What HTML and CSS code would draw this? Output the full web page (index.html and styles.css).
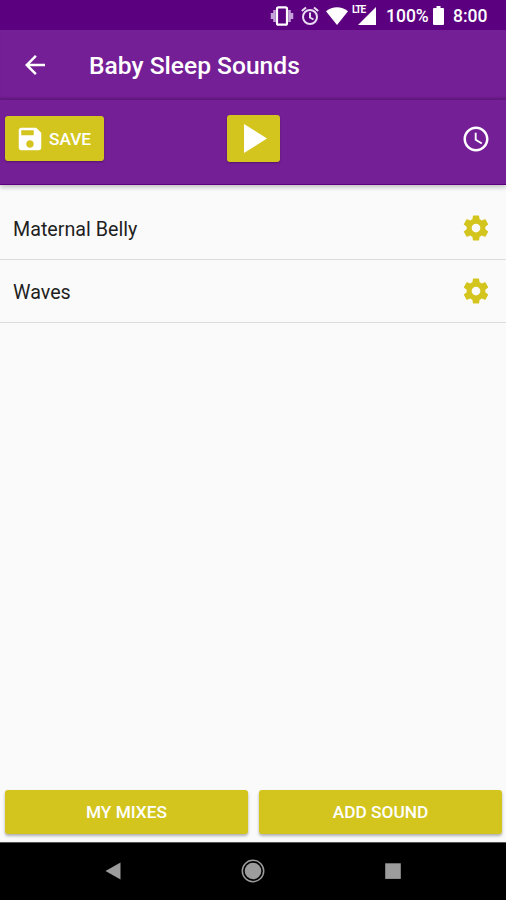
FILE: index.html
```
<!doctype html>
<html lang="en-US">
  <head>
    <meta charset="utf-8" />
    <title>Baby Sleep Sounds</title>
    <meta name="viewport" content="width=device-width, initial-scale=1" />
    <link rel="stylesheet" href="styles.css">
  </head>
  <body>
    <div id="wrapper">
      <div class="status-bar">
        <svg class="vibrate" viewBox="0 0 24 20">
          <path d="M2 7v6M4.500 4v12M19.500 4v12M22 7v6" stroke="#c5a3d8" stroke-width="2.500" />
          <rect x="7" y="1.300" width="10" height="17.400" rx="1.500" fill="none" stroke="#fff" stroke-width="2.200" />
        </svg>
        <svg class="alarm" viewBox="0 0 18 20">
          <g fill="none" stroke="#eadcf2" stroke-width="2">
            <circle cx="9" cy="11" r="7" />
            <path d="M.8 5 5 1.400M17.200 5 13 1.400M9 6.500v5l3.500 2" />
          </g>
        </svg>
        <svg class="wifi" viewBox="0 0 22 18">
          <path d="M0 4.200C6.500-1.200 15.500-1.200 22 4.200L11 18z" fill="#fff" />
        </svg>
        <div class="signal">
          <span>LTE</span>
          <svg viewBox="0 0 18 18"><path d="M18 0v18H0z" fill="#fff" /></svg>
        </div>
        <span class="percent">100%</span>
        <svg class="battery" viewBox="0 0 11 19">
          <path d="M3.500 0h4v2H10q1 0 1 1v15q0 1-1 1H1q-1 0-1-1V3q0-1 1-1h2.500z" fill="#fff" />
        </svg>
        <span class="time">8:00</span>
      </div>
      <header>
        <svg class="icon" viewBox="0 0 24 24">
          <path d="M20 11H7.830l5.590-5.590L12 4l-8 8 8 8 1.410-1.410L7.830 13H20v-2z" />
        </svg>
        <h1>Baby Sleep Sounds</h1>
      </header>
      <div class="toolbar">
        <button class="save">
          <svg class="icon" viewBox="0 0 24 24">
            <path d="M17 3H5c-1.110 0-2 .9-2 2v14c0 1.100.890 2 2 2h14c1.100 0 2-.9 2-2V7l-4-4zm-5 16c-1.660 0-3-1.340-3-3s1.340-3 3-3 3 1.340 3 3-1.340 3-3 3zm3-10H5V5h10v4z" />
          </svg>
          Save
        </button>
        <button class="play">
          <svg viewBox="0 0 23 29"><path d="M0 0v29l23-14.500z" fill="#fff" /></svg>
        </button>
        <svg class="icon timer" viewBox="0 0 24 24">
          <path d="M11.990 2C6.470 2 2 6.480 2 12s4.470 10 9.990 10C17.520 22 22 17.520 22 12S17.520 2 11.990 2zM12 20c-4.420 0-8-3.580-8-8s3.580-8 8-8 8 3.580 8 8-3.580 8-8 8zM12.500 7H11v6l5.250 3.150.750-1.230-4.500-2.670z" />
        </svg>
      </div>
      <ul>
        <li>
          <span>Maternal Belly</span>
          <svg class="icon gear" viewBox="0 0 24 24"><use href="#gear" /></svg>
        </li>
        <li>
          <span>Waves</span>
          <svg class="icon gear" viewBox="0 0 24 24"><use href="#gear" /></svg>
        </li>
      </ul>
      <div class="actions">
        <button>My Mixes</button>
        <button>Add Sound</button>
      </div>
      <nav>
        <svg viewBox="0 0 24 24"><path d="M4.500 12 19.500 3.500v17z" /></svg>
        <svg viewBox="0 0 24 24">
          <circle cx="12" cy="12" r="8.300" />
          <circle cx="12" cy="12" r="10.700" fill="none" stroke="#9c9c9c" stroke-width="1.500" />
        </svg>
        <svg viewBox="0 0 24 24"><path d="M4.200 4.300h15.600v15.600H4.200z" /></svg>
      </nav>
    </div>
    <svg class="defs">
      <defs>
        <path id="gear" d="M19.430 12.980c.040-.320.070-.640.070-.980s-.030-.660-.070-.980l2.110-1.650c.190-.150.240-.420.120-.640l-2-3.460c-.120-.220-.390-.300-.610-.220l-2.490 1c-.520-.400-1.080-.730-1.690-.980l-.380-2.650C14.460 2.180 14.250 2 14 2h-4c-.250 0-.460.180-.490.420l-.380 2.650c-.610.250-1.170.590-1.690.980l-2.490-1c-.230-.090-.490 0-.610.220l-2 3.460c-.130.220-.070.490.120.640l2.110 1.650c-.040.320-.070.650-.070.980s.030.660.070.980l-2.110 1.650c-.190.150-.240.420-.120.640l2 3.460c.120.220.390.300.610.220l2.490-1c.520.400 1.080.730 1.690.980l.380 2.650c.030.240.240.420.490.420h4c.250 0 .460-.180.490-.420l.380-2.650c.610-.250 1.170-.590 1.690-.980l2.490 1c.230.090.490 0 .610-.220l2-3.460c.120-.220.070-.490-.120-.640l-2.110-1.650zM12 15.500c-1.930 0-3.500-1.570-3.500-3.500s1.570-3.500 3.500-3.500 3.500 1.570 3.500 3.500-1.570 3.500-3.500 3.500z" />
      </defs>
    </svg>
  </body>
</html>
```
FILE: styles.css
```
* {
  box-sizing: border-box;
  font-family: Roboto, "Liberation Sans", sans-serif;
  margin: 0;
  padding: 0;
}

body {
  background: #fafafa;
}

svg {
  display: block;
  flex: none;
}

#wrapper {
  display: flex;
  flex-direction: column;
  height: 100vh;
}

.icon {
  width: 30px;
  height: 30px;
  fill: #fff;
}

.defs {
  display: none;
}

.status-bar {
  display: flex;
  align-items: center;
  justify-content: flex-end;
  height: 30px;
  padding: 1px 18px 0 0;
  background: #5b007f;
  color: #fff;
  font-size: 17.5px;
  font-weight: 500;
}

.vibrate {
  width: 24px;
  height: 20px;
}

.alarm {
  width: 18px;
  height: 20px;
  margin-left: 7px;
}

.wifi {
  width: 22px;
  height: 18px;
  margin-left: 7px;
}

.signal {
  position: relative;
  margin: 1px 0 0 10px;
}

.signal svg {
  width: 18px;
  height: 18px;
}

.signal span {
  position: absolute;
  left: -6px;
  top: -2px;
  font-size: 10px;
  font-weight: 700;
  line-height: 10px;
  letter-spacing: -1px;
}

.percent {
  width: 43px;
  margin-left: 10px;
}

.battery {
  width: 11px;
  height: 19px;
  margin-left: 4px;
}

.time {
  width: 35px;
  margin-left: 9px;
}

header {
  display: flex;
  align-items: center;
  height: 70px;
  padding: 0 0 1px 20px;
  background: #751f96;
  box-shadow: inset 0 -3px 2px -1px #65197f;
}

h1 {
  margin: 1px 0 0 39px;
  color: #fff;
  font-size: 24.6px;
  font-weight: 500;
}

.toolbar {
  display: grid;
  grid-template-columns: 1fr auto 1fr;
  align-items: center;
  height: 85px;
  padding: 0 15px 7px 5px;
  background: #751f96;
  border-bottom: 1px solid #5b007f;
  box-shadow: 0 2px 5px rgba(0, 0, 0, 0.25);
}

button {
  display: flex;
  align-items: center;
  justify-content: center;
  border: 0;
  border-radius: 3px;
  background: #d3c51e;
  color: #fff;
  font-size: 17.3px;
  font-weight: 500;
  text-transform: uppercase;
  box-shadow: 0 2px 3px rgba(0, 0, 0, 0.3);
}

.toolbar button {
  box-shadow: 0 1px 2px rgba(0, 0, 0, 0.3);
}

.save {
  width: 99px;
  height: 45px;
  padding-right: 3px;
  gap: 4px;
}

.play {
  width: 53px;
  height: 47px;
  margin-left: 10px;
  padding-left: 5px;
}

.play svg {
  width: 23px;
  height: 29px;
}

.timer {
  justify-self: end;
}

ul {
  flex: 1;
  padding-top: 12px;
  list-style: none;
}

li {
  display: flex;
  align-items: center;
  justify-content: space-between;
  height: 63px;
  padding: 0 15px 0 13px;
  border-bottom: 1px solid #dcdcdc;
  color: #1f1f1f;
  font-size: 19.7px;
}

li span {
  padding-top: 2px;
}

.gear {
  fill: #d3c51e;
}

.actions {
  display: grid;
  grid-template-columns: 1fr 1fr;
  gap: 11px;
  padding: 0 4px 8px 5px;
}

.actions button {
  height: 44px;
}

nav {
  display: flex;
  justify-content: center;
  gap: 116px;
  height: 58px;
  padding-top: 16px;
  background: #000;
  border-top: 1px solid #555;
}

nav svg {
  width: 24px;
  height: 24px;
  fill: #9c9c9c;
}
```
